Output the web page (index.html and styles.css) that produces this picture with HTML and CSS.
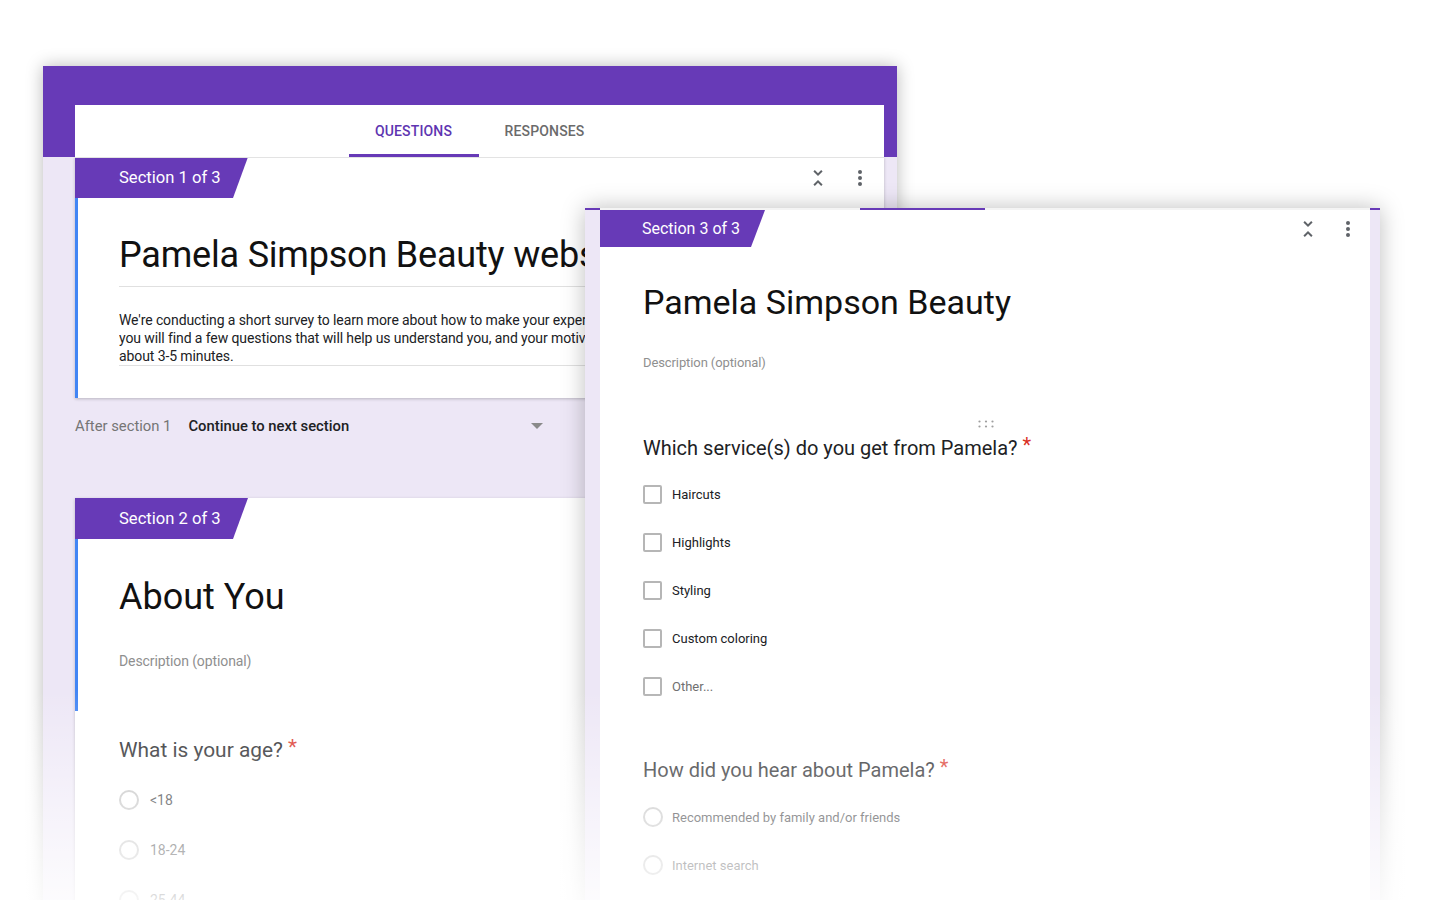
FILE: index.html
```html
<!DOCTYPE html>
<html lang="en">
<head>
<meta charset="utf-8">
<title>Pamela Simpson Beauty – Form editor</title>
<link rel="stylesheet" href="styles.css">
</head>
<body>
<div class="stage">
  <div class="win back">
    <div class="tabbar">
      <div class="tab active">Questions</div>
      <div class="tab tab-resp">Responses</div>
    </div>

    <div class="card">
      <div class="card-head">
        <div class="sec-tab">Section 1 of 3</div>
        <div class="head-icons">
          <svg class="ic" viewBox="0 0 24 24"><path d="M7.41 18.59L8.83 20 12 16.83 15.17 20l1.41-1.41L12 14l-4.59 4.59zm9.18-13.18L15.17 4 12 7.17 8.83 4 7.41 5.41 12 10l4.59-4.59z"/></svg>
          <svg class="ic" viewBox="0 0 24 24"><circle cx="12" cy="6" r="2"/><circle cx="12" cy="12" r="2"/><circle cx="12" cy="18" r="2"/></svg>
        </div>
      </div>
      <div class="card-body selected s1">
        <div class="title uline">Pamela Simpson Beauty website survey</div>
        <div class="desc uline">We're conducting a short survey to learn more about how to make your experience better. In this survey<br>you will find a few questions that will help us understand you, and your motivations. It will take<br>about 3-5 minutes.</div>
      </div>
    </div>

    <div class="after">
      <span class="after-label">After section 1</span>
      <div class="dropdown"><span>Continue to next section</span><span class="caret"></span></div>
    </div>

    <div class="card sec2">
      <div class="card-head">
        <div class="sec-tab">Section 2 of 3</div>
      </div>
      <div class="card-body selected s2">
        <div class="title">About You</div>
        <div class="placeholder">Description (optional)</div>
      </div>
      <div class="question q-age">
        <div class="q-title age">What is your age?<span class="req">*</span></div>
        <div class="opts radios-back">
          <div class="opt"><span class="radio"></span><span class="opt-label">&lt;18</span></div>
          <div class="opt"><span class="radio"></span><span class="opt-label">18-24</span></div>
          <div class="opt"><span class="radio"></span><span class="opt-label">25-44</span></div>
        </div>
      </div>
    </div>
  </div>

  <div class="win front">
    <div class="front-top"></div>
    <div class="card fcard">
      <div class="card-head fhead">
        <div class="sec-tab ftab">Section 3 of 3</div>
        <div class="head-icons fic">
          <svg class="ic" viewBox="0 0 24 24"><path d="M7.41 18.59L8.83 20 12 16.83 15.17 20l1.41-1.41L12 14l-4.59 4.59zm9.18-13.18L15.17 4 12 7.17 8.83 4 7.41 5.41 12 10l4.59-4.59z"/></svg>
          <svg class="ic" viewBox="0 0 24 24"><circle cx="12" cy="6" r="2"/><circle cx="12" cy="12" r="2"/><circle cx="12" cy="18" r="2"/></svg>
        </div>
      </div>
      <div class="card-body fbody">
        <div class="title ftitle">Pamela Simpson Beauty</div>
        <div class="placeholder fph">Description (optional)</div>
        <div class="drag">
          <svg width="16" height="8" viewBox="0 0 16 8"><circle cx="1.5" cy="1.5" r="1.1"/><circle cx="8" cy="1.5" r="1.1"/><circle cx="14.5" cy="1.5" r="1.1"/><circle cx="1.5" cy="6.5" r="1.1"/><circle cx="8" cy="6.5" r="1.1"/><circle cx="14.5" cy="6.5" r="1.1"/></svg>
        </div>
        <div class="q-title">Which service(s) do you get from Pamela?<span class="req">*</span></div>
        <div class="opts checks">
          <div class="opt"><span class="check"></span><span class="opt-label">Haircuts</span></div>
          <div class="opt"><span class="check"></span><span class="opt-label">Highlights</span></div>
          <div class="opt"><span class="check"></span><span class="opt-label">Styling</span></div>
          <div class="opt"><span class="check"></span><span class="opt-label">Custom coloring</span></div>
          <div class="opt"><span class="check"></span><span class="opt-label other">Other...</span></div>
        </div>
        <div class="q-title q2">How did you hear about Pamela?<span class="req">*</span></div>
        <div class="opts radios-front">
          <div class="opt"><span class="radio"></span><span class="opt-label">Recommended by family and/or friends</span></div>
          <div class="opt"><span class="radio"></span><span class="opt-label">Internet search</span></div>
        </div>
      </div>
    </div>
  </div>

  <div class="fade"></div>
</div>
</body>
</html>
```

FILE: styles.css
```css
* { box-sizing: border-box; }

body {
  margin: 0;
  background: #ffffff;
  font-family: Roboto, "Noto Sans", "Liberation Sans", Arial, sans-serif;
  color: #202124;
}

.stage {
  position: relative;
  width: 1440px;
  height: 900px;
  overflow: hidden;
  background: #ffffff;
}

.win {
  position: absolute;
  overflow: hidden;
  background: #ede7f6;
}

/* ---------- back window ---------- */
.back {
  left: 43px;
  top: 66px;
  width: 854px;
  height: 880px;
  background: linear-gradient(#673ab7 0 91px, #ede7f6 91px);
  padding: 39px 13px 0 32px;
  box-shadow: 0 0 16px rgba(0, 0, 0, 0.28);
}

.tabbar {
  height: 52px;
  background: #ffffff;
  display: flex;
  justify-content: center;
  box-shadow: 0 1px 0 #e3e3e3;
  position: relative;
  z-index: 1;
}

.tab {
  width: 130px;
  display: flex;
  align-items: center;
  justify-content: center;
  font-size: 14px;
  font-weight: 500;
  letter-spacing: 0.15px;
  text-transform: uppercase;
  color: #6b6b6b;
}

.tab.active {
  color: #5e35b1;
  border-bottom: 3px solid #673ab7;
  padding-top: 3px;
}

.tab-resp { width: 132px; }

.card {
  background: #ffffff;
  box-shadow: 0 1px 3px rgba(0, 0, 0, 0.22);
}

.card-head {
  height: 41px;
  display: flex;
  justify-content: space-between;
  align-items: center;
}

.sec-tab {
  height: 41px;
  width: 173px;
  padding-left: 44px;
  display: flex;
  align-items: center;
  background: #673ab7;
  color: #ffffff;
  font-size: 16.6px;
  clip-path: polygon(0 0, 100% 0, calc(100% - 15px) 100%, 0 100%);
  align-self: flex-start;
}

.head-icons {
  display: flex;
  gap: 18px;
  padding-right: 12px;
}

.ic {
  width: 24px;
  height: 24px;
  fill: #5f6368;
  display: block;
}

.card-body {
  padding-left: 44px;
  padding-right: 44px;
}

.card-body.selected {
  border-left: 3px solid #4285f4;
  padding-left: 41px;
}

.title {
  font-size: 36px;
  line-height: 48px;
  white-space: nowrap;
  overflow: hidden;
  color: #111111;
}

.uline {
  border-bottom: 1px solid #e0e0e0;
}

.s1 {
  padding-top: 33px;
  padding-bottom: 32px;
}

.s1 .title {
  padding-bottom: 7px;
  letter-spacing: -0.2px;
}

.desc {
  margin-top: 24px;
  font-size: 14px;
  line-height: 18px;
  white-space: nowrap;
  overflow: hidden;
  color: #202124;
  letter-spacing: -0.1px;
}

.after {
  height: 56px;
  display: flex;
  align-items: center;
  font-size: 14.8px;
}

.after-label {
  color: #757575;
}

.dropdown {
  margin-left: 17px;
  width: 358px;
  display: flex;
  align-items: center;
  justify-content: space-between;
  font-weight: 500;
  color: #202124;
  padding-right: 3px;
}

.caret {
  width: 0;
  height: 0;
  border-left: 6px solid transparent;
  border-right: 6px solid transparent;
  border-top: 6px solid #8a8a8a;
}

.sec2 {
  margin-top: 44px;
}

.s2 {
  padding-top: 34px;
  padding-bottom: 41px;
}

.placeholder {
  margin-top: 31px;
  font-size: 14px;
  line-height: 18px;
  color: #8f8f8f;
  letter-spacing: -0.1px;
}

.question {
  padding: 27px 44px 0 44px;
}

.q-title {
  font-size: 20px;
  line-height: 24px;
  color: #202124;
  white-space: nowrap;
}

.q-title.age {
  font-size: 20.9px;
}

.req {
  color: #d93025;
  margin-left: 5px;
  position: relative;
  top: -3px;
}

.opts {
  display: flex;
  flex-direction: column;
}

.opt {
  display: flex;
  align-items: center;
  font-size: 14px;
  color: #202124;
}

.radios-back {
  margin-top: 13px;
}

.radios-back .opt {
  height: 50px;
}

.radio {
  width: 20px;
  height: 20px;
  border-radius: 50%;
  border: 2px solid #bdbdbd;
  flex: none;
}

.radios-back .opt-label {
  margin-left: 11px;
}

/* ---------- front window ---------- */
.front {
  left: 585px;
  top: 208px;
  width: 795px;
  height: 740px;
  padding: 0 10px 0 15px;
  box-shadow: 0 0 22px rgba(0, 0, 0, 0.26);
}

.front-top {
  height: 2px;
  margin: 0 -10px 0 -15px;
  background: linear-gradient(to right,
    #673ab7 0 15px,
    #f4f4f4 15px 275px,
    #673ab7 275px 400px,
    #f4f4f4 400px 785px,
    #673ab7 785px);
}

.fcard {
  height: 100%;
  box-shadow: none;
}

.fhead {
  height: 37px;
}

.ftab {
  height: 37px;
  width: 165px;
  padding-left: 42px;
  font-size: 16px;
  clip-path: polygon(0 0, 100% 0, calc(100% - 14px) 100%, 0 100%);
}

.fic {
  gap: 16px;
  padding-right: 10px;
}

.fbody {
  padding-top: 31px;
  padding-left: 43px;
}

.ftitle {
  font-size: 34px;
}

.fph {
  margin-top: 28px;
  font-size: 13px;
}

.drag {
  margin-top: 40px;
  height: 24px;
  display: flex;
  justify-content: center;
  align-items: center;
  fill: #9e9e9e;
  padding-left: 3px;
}

.checks {
  margin-top: 10px;
}

.checks .opt {
  height: 48px;
  font-size: 13px;
}

.check {
  width: 19px;
  height: 19px;
  border: 2px solid #b6b6b6;
  border-radius: 2px;
  flex: none;
}

.checks .opt-label {
  margin-left: 10px;
}

.other {
  color: #707070;
}

.q2 {
  margin-top: 48px;
}

.radios-front {
  margin-top: 11px;
}

.radios-front .opt {
  height: 48px;
  font-size: 13px;
}

.radios-front .opt-label {
  margin-left: 9px;
}

/* ---------- bottom fade ---------- */
.fade {
  position: absolute;
  left: 0;
  right: 0;
  top: 690px;
  bottom: 0;
  background: linear-gradient(rgba(255, 255, 255, 0), rgba(255, 255, 255, 0.86));
  pointer-events: none;
}
```
